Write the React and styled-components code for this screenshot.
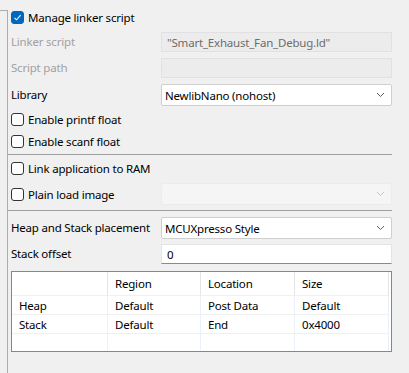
import React from "react";
import styled, { createGlobalStyle } from "styled-components";

const GlobalStyle = createGlobalStyle`
  html, body {
    margin: 0;
    padding: 0;
    background: #f0f0f0;
  }
  body {
    font-family: "Noto Sans", "Open Sans", sans-serif;
    font-size: 11.5px;
    letter-spacing: -0.2px;
    color: #000;
  }
`;

const Page = styled.div`
  display: flex;
  width: 409px;
  height: 373px;
  overflow: hidden;
  background: #f0f0f0;
`;

const FrameEdge = styled.div`
  width: 7px;
  margin-top: 10px;
  border-top: 1px solid #adadad;
  border-right: 1px solid #adadad;
  flex-shrink: 0;
`;

const Content = styled.div`
  display: flex;
  flex-direction: column;
  padding: 7px 17px 0 3px;
  flex: 1;
`;

const Row = styled.div`
  display: grid;
  grid-template-columns: 150px 1fr;
  align-items: center;
  height: ${(p) => p.h || 20}px;
  margin-top: ${(p) => p.mt || 0}px;
`;

const Label = styled.span`
  color: ${(p) => (p.disabled ? "#a0a0a0" : "#000")};
  white-space: nowrap;
  line-height: 16px;
`;

const CheckRow = styled.label`
  display: flex;
  align-items: center;
  gap: 4px;
  height: 20px;
  margin-top: ${(p) => p.mt || 0}px;
  white-space: nowrap;
`;

const Box = styled.span`
  width: 13px;
  height: 13px;
  box-sizing: border-box;
  border-radius: 3px;
  display: inline-flex;
  align-items: center;
  justify-content: center;
  background: ${(p) => (p.checked ? "#0067c0" : "#fff")};
  border: 1px solid ${(p) => (p.checked ? "#0067c0" : "#333")};
`;

const TextField = styled.div`
  height: 20px;
  box-sizing: border-box;
  background: ${(p) => (p.disabled ? "#ececec" : "#fff")};
  border: 1px solid ${(p) => (p.disabled ? "#e1e1e1" : "#e4e4e4")};
  border-bottom-color: ${(p) => (p.disabled ? "#e1e1e1" : "#8a8a8a")};
  color: ${(p) => (p.disabled ? "#6d6d6d" : "#000")};
  padding: 0 5px;
  display: flex;
  align-items: center;
  white-space: nowrap;
`;

const Select = styled.div`
  height: 22px;
  box-sizing: border-box;
  background: ${(p) => (p.disabled ? "#f5f5f5" : "#fff")};
  border: 1px solid ${(p) => (p.disabled ? "#ececec" : "#cfcfcf")};
  border-radius: 2px;
  display: flex;
  align-items: center;
  justify-content: space-between;
  padding: 0 6px 0 3px;
  white-space: nowrap;
`;

const Separator = styled.div`
  height: 1px;
  background: #a0a0a0;
  margin-top: ${(p) => p.mt || 0}px;
  margin-left: -3px;
`;

const Table = styled.div`
  margin-top: 7px;
  height: 81px;
  box-sizing: border-box;
  border: 1px solid #828790;
  background: #fff;
  display: grid;
  grid-template-columns: 96px 93px 94px 94px;
  grid-template-rows: 24px 19px 19px 17px;
  align-content: start;
`;

const Cell = styled.div`
  padding-left: 7px;
  display: flex;
  align-items: center;
  border-right: 1px solid ${(p) => (p.head ? "#e5e5e5" : "#eaf1fb")};
  border-bottom: 1px solid ${(p) => (p.last ? "transparent" : "#f0f0f0")};
  box-sizing: border-box;
  white-space: nowrap;
`;

const Check = () => (
  <svg width="9" height="9" viewBox="0 0 9 9">
    <path d="M1.5 4.8 L3.6 6.8 L7.6 2.2" fill="none" stroke="#fff" strokeWidth="1.1" />
  </svg>
);

const Chevron = ({ disabled }) => (
  <svg width="9" height="6" viewBox="0 0 9 6">
    <path d="M1 1 L4.5 4.5 L8 1" fill="none" stroke={disabled ? "#c4c4c4" : "#606060"} strokeWidth="1" />
  </svg>
);

const CheckBox = ({ checked, children, mt }) => (
  <CheckRow mt={mt}>
    <Box checked={checked}>{checked && <Check />}</Box>
    {children}
  </CheckRow>
);

const rows = [
  ["", "Region", "Location", "Size"],
  ["Heap", "Default", "Post Data", "Default"],
  ["Stack", "Default", "End", "0x4000"],
  ["", "", "", ""],
];

export default function App() {
  return (
    <>
      <GlobalStyle />
      <Page>
        <FrameEdge />
        <Content>
          <CheckBox checked>Manage linker script</CheckBox>
          <Row mt={5}>
            <Label disabled>Linker script</Label>
            <TextField disabled>"Smart_Exhaust_Fan_Debug.ld"</TextField>
          </Row>
          <Row mt={6}>
            <Label disabled>Script path</Label>
            <TextField disabled />
          </Row>
          <Row mt={6} h={22}>
            <Label>Library</Label>
            <Select>
              NewlibNano (nohost)
              <Chevron />
            </Select>
          </Row>
          <CheckBox mt={3}>Enable printf float</CheckBox>
          <CheckBox mt={2}>Enable scanf float</CheckBox>
          <Separator mt={3} />
          <CheckBox mt={3}>Link application to RAM</CheckBox>
          <Row mt={5} h={22}>
            <CheckBox>Plain load image</CheckBox>
            <Select disabled>
              <span />
              <Chevron disabled />
            </Select>
          </Row>
          <Separator mt={5} />
          <Row mt={6} h={22}>
            <Label>Heap and Stack placement</Label>
            <Select>
              MCUXpresso Style
              <Chevron />
            </Select>
          </Row>
          <Row mt={5}>
            <Label>Stack offset</Label>
            <TextField>0</TextField>
          </Row>
          <Table>
            {rows.map((r, i) =>
              r.map((c, j) => (
                <Cell key={i + "-" + j} head={i === 0} last={i === rows.length - 1}>
                  {c}
                </Cell>
              ))
            )}
          </Table>
        </Content>
      </Page>
    </>
  );
}
